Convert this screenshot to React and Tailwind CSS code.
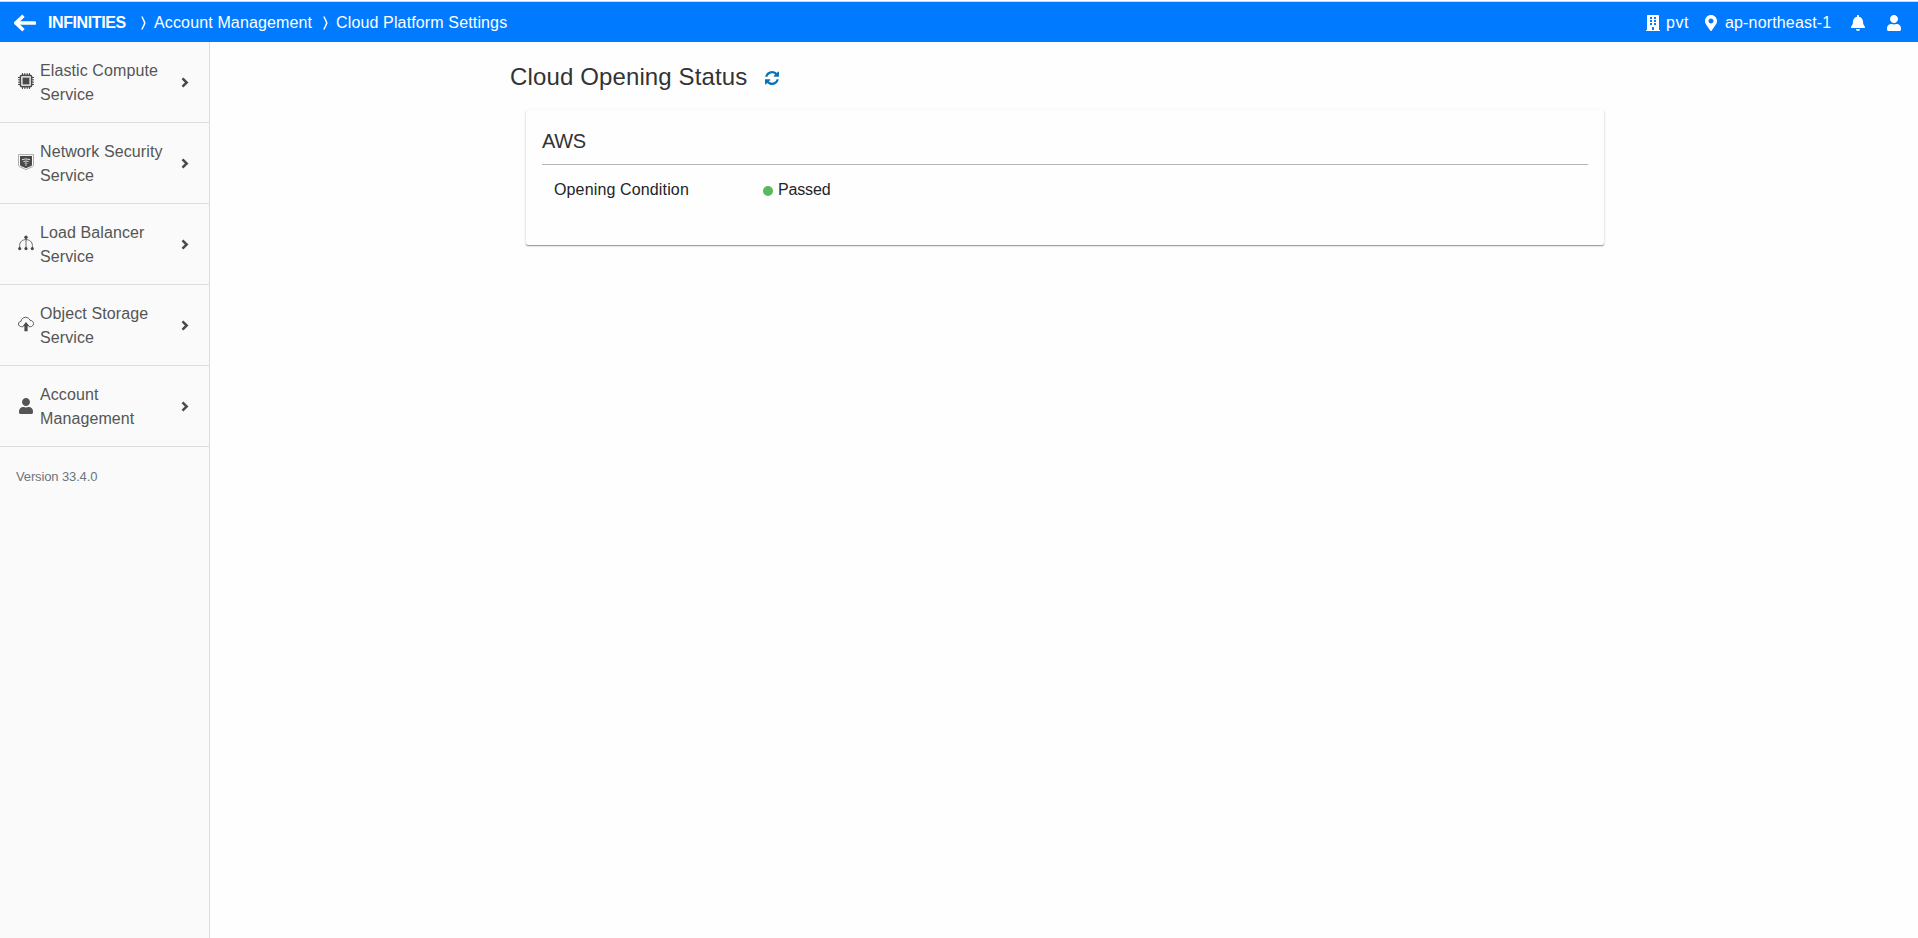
import React from "react";
import { FaBuilding, FaMapMarkerAlt, FaBell, FaUser } from "react-icons/fa";

function ArrowIcon() {
  return (
    <svg viewBox="0 0 23 18" className="h-[18px] w-[23px]" fill="none" stroke="#fff" strokeLinejoin="round">
      <path d="M3 9H21.500" strokeWidth="3.600" strokeLinecap="round" />
      <path d="M10.500 1.800L2.800 9l7.700 7.200" strokeWidth="3.500" />
    </svg>
  );
}

function ChevronIcon() {
  return (
    <svg viewBox="0 0 8 11" className="h-[11px] w-2" fill="none" stroke="#4a4a4a">
      <path d="M1.500 1.300L5.700 5.500 1.500 9.700" strokeWidth="2.500" />
    </svg>
  );
}

function RefreshIcon() {
  return (
    <svg viewBox="0 0 1536 1536" className="h-[14px] w-[14px]" fill="#0c72b8">
      <path d="M1511 928q0 5-1 7-64 268-268 434.500t-478 166.500q-146 0-282.500-55t-243.500-157l-129 129q-19 19-45 19t-45-19-19-45v-448q0-26 19-45t45-19h448q26 0 45 19t19 45-19 45l-137 137q71 66 161 102t187 36q134 0 250-65t186-179q11-17 53-117 8-23 30-23h192q13 0 22.500 9.500t9.500 22.500zm25-800v448q0 26-19 45t-45 19h-448q-26 0-45-19t-19-45 19-45l138-138q-148-137-349-137-134 0-250 65t-186 179q-11 17-53 117-8 23-30 23h-199q-13 0-22.500-9.500t-9.500-22.500v-7q65-268 270-434.500t480-166.500q146 0 284 55.500t245 156.500l130-129q19-19 45-19t45 19 19 45z" />
    </svg>
  );
}

function ChipIcon() {
  return (
    <svg viewBox="0 0 16 16" className="h-4 w-4" fill="none" stroke="#4a4a4a">
      <path d="M4.500 0v16M6.800 0v16M9.200 0v16M11.500 0v16M0 4.500h16M0 6.800h16M0 9.200h16M0 11.500h16" strokeWidth="1" />
      <rect x="2.300" y="2.300" width="11.400" height="11.400" rx="1.800" fill="#d6d6d6" strokeWidth="1.400" />
      <rect x="4.700" y="4.700" width="6.600" height="6.600" fill="#4a4a4a" stroke="none" />
    </svg>
  );
}

function ShieldIcon() {
  return (
    <svg viewBox="0 0 16 16" className="h-4 w-4" fill="none">
      <path d="M.5 .6h15v10.600q0 1-1 1.500L8 15.600l-6.500-2.900q-1-.5-1-1.500z" stroke="#999" strokeWidth=".8" />
      <path d="M2 2h12v8.800q0 .8-.8 1.200L8 14.200 2.800 12q-.8-.4-.8-1.200z" fill="#4a4a4a" />
      <path d="M4 5.700q4-1.600 8 0M5.400 7.600q2.600-1.200 5.200 0M6.700 9.300q1.300-.7 2.600 0" stroke="#eee" strokeWidth=".9" />
      <circle cx="8" cy="11" r=".7" fill="#eee" />
    </svg>
  );
}

function BalancerIcon() {
  return (
    <svg viewBox="0 0 16 16" className="h-4 w-4" fill="none" stroke="#4a4a4a">
      <path d="M8 2v11M1.600 13V10.500C1.600 6.800 4.500 4.600 8 4.600s6.400 2.200 6.400 5.900V13" strokeWidth=".8" />
      <g fill="#4a4a4a" stroke="none">
        <circle cx="8" cy="2.300" r="1.700" />
        <circle cx="1.700" cy="13.600" r="1.600" />
        <circle cx="8" cy="13.600" r="1.600" />
        <circle cx="14.300" cy="13.600" r="1.600" />
      </g>
    </svg>
  );
}

function CloudIcon() {
  return (
    <svg viewBox="0 0 16 16" className="h-4 w-4" fill="none">
      <path d="M5.500 10.700H3.500C1.700 10.700 .5 9.500 .5 8s1.100-2.600 2.600-2.700C3.300 3 5.200 1.300 7.600 1.300c2 0 3.700 1.200 4.400 3 2 .1 3.500 1.500 3.500 3.300 0 1.700-1.400 3.100-3.200 3.100h-1.800" stroke="#4a4a4a" strokeWidth=".9" />
      <path d="M8 6l3.200 4H9.600v5.200H6.400V10H4.800z" fill="#4a4a4a" />
    </svg>
  );
}

function AccountIcon() {
  return <FaUser className="mt-0.5 h-4 w-4" />;
}

const services = [
  { icon: ChipIcon, first: "Elastic Compute", second: "Service" },
  { icon: ShieldIcon, first: "Network Security", second: "Service" },
  { icon: BalancerIcon, first: "Load Balancer", second: "Service" },
  { icon: CloudIcon, first: "Object Storage", second: "Service" },
  { icon: AccountIcon, first: "Account", second: "Management" },
];

function Separator() {
  return (
    <svg viewBox="0 0 5 14" className="h-[14px] w-[5px]" fill="none" stroke="#fff" strokeWidth="1.500">
      <path d="M.8 .5Q2.800 4 3.800 7Q2.800 10 .8 13.500" />
    </svg>
  );
}

function Header() {
  return (
    <header className="flex h-[42px] shrink-0 items-center border-t border-white bg-[#007bff] text-base text-white shadow-[inset_0_1px_0_#cfd8dc]">
      <span className="mt-0.5 ml-[13px]"><ArrowIcon /></span>
      <span className="mt-[3px] ml-3 w-[78px] font-bold tracking-[-0.400px]">INFINITIES</span>
      <span className="mt-[3px] ml-[15px]"><Separator /></span>
      <span className="mt-[3px] ml-2 w-[159px] whitespace-nowrap tracking-[0.140px]">Account Management</span>
      <span className="mt-[3px] ml-[10px]"><Separator /></span>
      <span className="mt-[3px] ml-2 whitespace-nowrap tracking-[0.140px]">Cloud Platform Settings</span>
      <div className="mt-[3px] ml-auto flex items-center">
        <FaBuilding className="h-4 w-[14px]" />
        <span className="ml-[6px] w-[23px] tracking-[0.500px]">pvt</span>
        <FaMapMarkerAlt className="ml-4 h-4 w-3" />
        <span className="ml-2 w-[106px] whitespace-nowrap tracking-[0.160px]">ap-northeast-1</span>
        <FaBell className="ml-5 h-4 w-[14px]" />
        <FaUser className="mr-[17px] ml-[22px] h-4 w-[14px]" />
      </div>
    </header>
  );
}

function Sidebar() {
  return (
    <nav className="w-[210px] shrink-0 border-r border-[#dcdcdc] bg-[#fafafa] text-[#555]">
      {services.map(({ icon: Icon, first, second }) => (
        <div key={first} className="flex h-[81px] items-center border-b border-[#dedede] pl-[18px]">
          <span className="-mt-0.5"><Icon /></span>
          <div className="mt-0.5 ml-[6px] w-[136px] text-base leading-6 tracking-[0.100px]">
            <div>{first}</div>
            <div>{second}</div>
          </div>
          <span className="ml-[5px]"><ChevronIcon /></span>
        </div>
      ))}
      <p className="mt-5 ml-4 text-[13px] leading-5 tracking-[-0.130px] text-[#6c757d]">Version 33.4.0</p>
    </nav>
  );
}

export default function App() {
  return (
    <div className="flex h-screen flex-col overflow-hidden bg-[#fefefe] font-['Liberation_Sans',Arial,sans-serif]">
      <Header />
      <div className="flex min-h-0 flex-1">
        <Sidebar />
        <main className="flex-1 pt-5 pl-[300px] text-[#333]">
          <div className="flex items-center">
            <h1 className="w-[239px] text-2xl leading-[30px] tracking-[0.130px] whitespace-nowrap">Cloud Opening Status</h1>
            <span className="mt-px ml-4"><RefreshIcon /></span>
          </div>
          <section className="mt-[18px] ml-4 h-[135px] w-[1078px] rounded-[2px] px-4 shadow-[0_1px_1px_#999,0_1px_3px_#ddd]">
            <h2 className="h-[55px] border-b border-[#b5b5b5] pt-[19px] text-xl leading-6 tracking-[-0.300px]">AWS</h2>
            <div className="flex pt-[13px] pl-3 text-base leading-6 text-[#212529]">
              <span className="w-[209px] tracking-[0.140px]">Opening Condition</span>
              <span className="mt-2 h-[10px] w-[10px] rounded-full bg-[#5cb85c]" />
              <span className="ml-[5px] tracking-[-0.160px]">Passed</span>
            </div>
          </section>
        </main>
      </div>
    </div>
  );
}
